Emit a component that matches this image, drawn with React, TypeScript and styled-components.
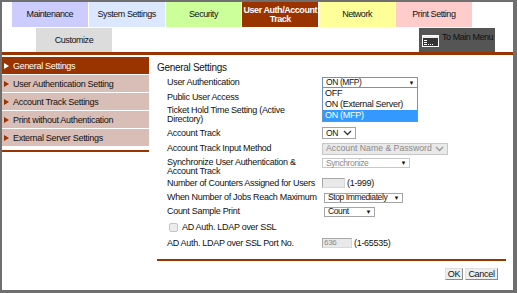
import React from "react";
import styled, { createGlobalStyle } from "styled-components";

const GlobalStyle = createGlobalStyle`
  html, body { margin: 0; padding: 0; background: #fff; }
  body { font-family: "Liberation Sans", Arial, sans-serif; }
  #root { width: 517px; height: 293px; }
`;

const BROWN = "#993300";

const Frame = styled.div`
  width: 517px;
  height: 293px;
  box-sizing: border-box;
  border-style: solid;
  border-color: #6f6f6f;
  border-width: 2px 4px 3px 2px;
  background: #fff;
  overflow: hidden;
  display: flex;
  flex-direction: column;
`;

const TabRow = styled.div`
  display: flex;
  height: 25px;
  padding-left: 10px;
`;

const Tab = styled.div<{ $bg: string; $active?: boolean }>`
  width: 76.8px;
  box-sizing: border-box;
  border-right: 1px solid #fff;
  background: ${(p) => p.$bg};
  color: ${(p) => (p.$active ? "#fff" : "#111")};
  font-weight: ${(p) => (p.$active ? 700 : 400)};
  display: flex;
  align-items: center;
  justify-content: center;
  text-align: center;
  font-size: 9px;
  line-height: 9px;
  letter-spacing: -0.45px;
  white-space: pre-line;
`;

const SubRow = styled.div`
  display: flex;
  justify-content: space-between;
  height: 24px;
  margin-top: 1px;
  padding: 0 18px 0 34px;
`;

const SubTab = styled(Tab)`
  width: 76px;
  border-right: none;
`;

const MainMenuButton = styled.div`
  width: 76px;
  box-sizing: border-box;
  background: #555;
  display: flex;
  align-items: flex-start;
  gap: 3px;
  padding: 4px 0 0 3px;
  font-size: 9px;
  letter-spacing: -0.45px;
  color: #111;
  line-height: 10px;
`;

const IconWrap = styled.div`
  padding-top: 3px;
  display: flex;
`;

const Rule = styled.div<{ $h: number }>`
  height: ${(p) => p.$h}px;
  background: ${BROWN};
  flex-shrink: 0;
`;

const Body = styled.div`
  display: flex;
  flex: 1;
`;

const Sidebar = styled.div`
  width: 147px;
  padding-top: 2px;
  display: flex;
  flex-direction: column;
`;

const SideItem = styled.div<{ $active?: boolean }>`
  height: 17px;
  margin-bottom: 1px;
  background: ${(p) => (p.$active ? BROWN : "#d9bdb7")};
  color: ${(p) => (p.$active ? "#fff" : "#111")};
  display: flex;
  align-items: center;
  padding-left: 2px;
  font-size: 9px;
  letter-spacing: -0.3px;
`;

const Tri = styled.span<{ $active?: boolean }>`
  width: 0;
  height: 0;
  border-left: 5px solid ${(p) => (p.$active ? "#fff" : BROWN)};
  border-top: 3px solid transparent;
  border-bottom: 3px solid transparent;
  margin-right: 4px;
`;

const SideRule = styled(Rule)`
  margin-top: 3px;
`;

const Main = styled.div`
  flex: 1;
  padding: 5px 7px 0 8px;
  display: flex;
  flex-direction: column;
`;

const Heading = styled.div`
  height: 15px;
  line-height: 15px;
  font-size: 10px;
  color: #111;
  letter-spacing: -0.3px;
`;

const Row = styled.div<{ $h: number }>`
  display: grid;
  grid-template-columns: 155px 1fr;
  align-items: center;
  height: ${(p) => p.$h}px;
  padding-left: 10px;
  font-size: 9px;
  letter-spacing: -0.3px;
  color: #111;
`;

const Label = styled.div<{ $pt?: number }>`
  line-height: 9px;
  padding-top: ${(p) => p.$pt ?? 0}px;
`;

const Control = styled.div<{ $top?: number; $indent?: number }>`
  display: flex;
  align-items: center;
  gap: 2px;
  align-self: ${(p) => (p.$top !== undefined ? "start" : "center")};
  margin-top: ${(p) => p.$top ?? 0}px;
  padding-left: ${(p) => p.$indent ?? 0}px;
`;

const SelectWrap = styled.div`
  position: relative;
`;

type Variant = "focus" | "disabled" | "muted" | "plain";

const borderFor = (v?: Variant) =>
  v === "focus" ? "#6f93c9" : v === "disabled" ? "#c6c6c6" : v === "muted" ? "#c8c8c8" : "#a5a5a5";

const SelectBox = styled.div<{ $w: number; $h?: number; $variant?: Variant }>`
  box-sizing: border-box;
  width: ${(p) => p.$w}px;
  height: ${(p) => p.$h ?? 11}px;
  border: 1px solid ${(p) => borderFor(p.$variant)};
  background: ${(p) => (p.$variant === "disabled" ? "#e9e9e9" : "#fff")};
  color: ${(p) => (p.$variant === "disabled" || p.$variant === "muted" ? "#8a8a8a" : "#111")};
  display: flex;
  align-items: center;
  justify-content: space-between;
  padding: 0 3px 0 3px;
  font-size: 8.5px;
  letter-spacing: -0.4px;
  line-height: 9px;
  white-space: nowrap;
`;

const WideText = styled.span`
  font-size: 8.7px;
  letter-spacing: 0;
`;

const Arrow = styled.span`
  font-size: 6px;
  color: #111;
  line-height: 6px;
`;

const DropList = styled.div`
  position: absolute;
  top: 100%;
  left: 0;
  width: 96px;
  box-sizing: border-box;
  border: 1px solid #6f93c9;
  border-top: none;
  background: #fff;
  z-index: 2;
`;

const DropItem = styled.div<{ $sel?: boolean }>`
  height: 11px;
  line-height: 11px;
  padding-left: 2px;
  font-size: 9px;
  background: ${(p) => (p.$sel ? "#3399ff" : "#fff")};
  color: ${(p) => (p.$sel ? "#fff" : "#111")};
`;

const TextInput = styled.div<{ $w: number }>`
  box-sizing: border-box;
  width: ${(p) => p.$w}px;
  height: 10px;
  background: #e9e9e9;
  border: 1px solid #a8a8a8;
  border-right-color: #d8d8d8;
  border-bottom-color: #d8d8d8;
  font-size: 8px;
  line-height: 8px;
  color: #8a8a8a;
  padding-left: 1px;
`;

const CheckRow = styled.div`
  display: flex;
  align-items: center;
  gap: 4px;
  padding-left: 2px;
`;

const Checkbox = styled.span`
  width: 9px;
  height: 9px;
  box-sizing: border-box;
  border: 1px solid #c4c4c4;
  border-radius: 2px;
  background: #ececec;
`;

const BottomRule = styled(Rule)`
  margin-top: 9px;
`;

const Buttons = styled.div`
  display: flex;
  justify-content: flex-end;
  gap: 2px;
  margin-top: 7px;
  padding-right: 8px;
`;

const Btn = styled.div<{ $w: number }>`
  box-sizing: border-box;
  width: ${(p) => p.$w}px;
  height: 12px;
  border: 1px solid #8c8c8c;
  border-top-color: #e0e0e0;
  border-left-color: #e0e0e0;
  background: #eeeeee;
  font-size: 9px;
  line-height: 10px;
  text-align: center;
  letter-spacing: -0.3px;
  color: #111;
`;

const Chevron = ({ color = "#333" }: { color?: string }) => (
  <svg width="9" height="6" viewBox="0 0 9 6">
    <polyline points="1,1 4.5,4.5 8,1" fill="none" stroke={color} strokeWidth="1.3" />
  </svg>
);

const MenuIcon = () => (
  <svg width="17" height="12" viewBox="0 0 17 12">
    <rect x="0.5" y="0.5" width="16" height="11" fill="#333" stroke="#fff" />
    <rect x="1" y="1" width="15" height="2" fill="#eee" />
    <rect x="2" y="5" width="3" height="1" fill="#fff" />
    <rect x="2" y="7" width="3" height="1" fill="#fff" />
    <rect x="2" y="9" width="3" height="1" fill="#fff" />
    <rect x="6" y="9" width="1" height="1" fill="#fff" />
    <rect x="8" y="9" width="1" height="1" fill="#fff" />
    <rect x="10" y="9" width="1" height="1" fill="#fff" />
  </svg>
);

const tabs = [
  { label: "Maintenance", bg: "#ccccff" },
  { label: "System Settings", bg: "#dce8ff" },
  { label: "Security", bg: "#ccff99" },
  { label: "User Auth/Account\nTrack", bg: BROWN, active: true },
  { label: "Network", bg: "#ffff99" },
  { label: "Print Setting", bg: "#ffcccc" },
];

const sideItems = [
  "General Settings",
  "User Authentication Setting",
  "Account Track Settings",
  "Print without Authentication",
  "External Server Settings",
];

export default function App() {
  return (
    <>
      <GlobalStyle />
      <Frame>
        <TabRow>
          {tabs.map((t) => (
            <Tab key={t.label} $bg={t.bg} $active={t.active}>
              {t.label}
            </Tab>
          ))}
        </TabRow>
        <SubRow>
          <SubTab $bg="#dcdcdc">Customize</SubTab>
          <MainMenuButton>
            <IconWrap>
              <MenuIcon />
            </IconWrap>
            <span>To Main Menu</span>
          </MainMenuButton>
        </SubRow>
        <Rule $h={3} />
        <Body>
          <Sidebar>
            {sideItems.map((s, i) => (
              <SideItem key={s} $active={i === 0}>
                <Tri $active={i === 0} />
                {s}
              </SideItem>
            ))}
            <SideRule $h={2} />
          </Sidebar>
          <Main>
            <Heading>General Settings</Heading>
            <Row $h={15}>
              <Label>User Authentication</Label>
              <Control>
                <SelectWrap>
                  <SelectBox $w={96} $variant="focus">
                    <span>ON (MFP)</span>
                    <Arrow>▼</Arrow>
                  </SelectBox>
                  <DropList>
                    <DropItem>OFF</DropItem>
                    <DropItem>ON (External Server)</DropItem>
                    <DropItem $sel>ON (MFP)</DropItem>
                  </DropList>
                </SelectWrap>
              </Control>
            </Row>
            <Row $h={14}>
              <Label>Public User Access</Label>
            </Row>
            <Row $h={20}>
              <Label $pt={1}>
                Ticket Hold Time Setting (Active
                <br />
                Directory)
              </Label>
            </Row>
            <Row $h={18}>
              <Label>Account Track</Label>
              <Control>
                <SelectBox $w={34} $h={12} $variant="plain">
                  <span>ON</span>
                  <Chevron color="#334" />
                </SelectBox>
              </Control>
            </Row>
            <Row $h={13}>
              <Label>Account Track Input Method</Label>
              <Control>
                <SelectBox $w={126} $h={12} $variant="disabled">
                  <WideText>Account Name &amp; Password</WideText>
                  <Chevron color="#999" />
                </SelectBox>
              </Control>
            </Row>
            <Row $h={21}>
              <Label $pt={2}>
                Synchronize User Authentication &amp;
                <br />
                Account Track
              </Label>
              <Control $top={3}>
                <SelectBox $w={88} $h={10} $variant="muted">
                  <span>Synchronize</span>
                  <Arrow>▼</Arrow>
                </SelectBox>
              </Control>
            </Row>
            <Row $h={14}>
              <Label>Number of Counters Assigned for Users</Label>
              <Control>
                <TextInput $w={23} />
                <span>(1-999)</span>
              </Control>
            </Row>
            <Row $h={15}>
              <Label>When Number of Jobs Reach Maximum</Label>
              <Control $indent={2}>
                <SelectBox $w={79} $h={10} $variant="plain">
                  <span>Stop Immediately</span>
                  <Arrow>▼</Arrow>
                </SelectBox>
              </Control>
            </Row>
            <Row $h={13}>
              <Label>Count Sample Print</Label>
              <Control $indent={2}>
                <SelectBox $w={51} $h={10} $variant="plain">
                  <span>Count</span>
                  <Arrow>▼</Arrow>
                </SelectBox>
              </Control>
            </Row>
            <Row $h={18}>
              <CheckRow>
                <Checkbox />
                <span>AD Auth. LDAP over SSL</span>
              </CheckRow>
            </Row>
            <Row $h={14}>
              <Label>AD Auth. LDAP over SSL Port No.</Label>
              <Control>
                <TextInput $w={30}>636</TextInput>
                <span>(1-65535)</span>
              </Control>
            </Row>
            <BottomRule $h={2} />
            <Buttons>
              <Btn $w={18}>OK</Btn>
              <Btn $w={33}>Cancel</Btn>
            </Buttons>
          </Main>
        </Body>
      </Frame>
    </>
  );
}
